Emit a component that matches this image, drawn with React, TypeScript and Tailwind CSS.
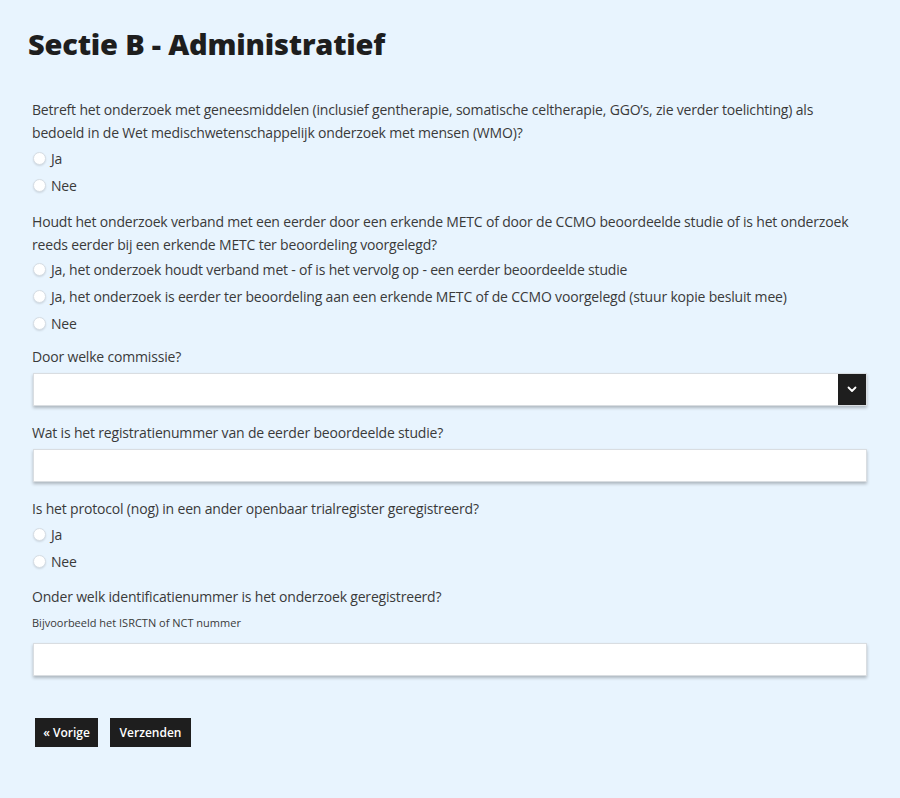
import React from "react";

const font = { fontFamily: '"Open Sans", "DejaVu Sans", sans-serif' };

const Radio = ({ label }: { label: string }) => (
  <label className="flex items-center h-[27px] text-[14px] text-[#3a3a3a]">
    <span className="w-[13px] h-[13px] rounded-full bg-white border border-[#d6dde4] shadow-[0_1px_2px_rgba(0,0,0,0.12)] mr-[5px] ml-[1px]" />
    {label}
  </label>
);

const Input = () => (
  <div className="h-[33px] bg-white border border-[#d9dde1] shadow-[0_2px_3px_rgba(0,0,0,0.25)] mr-[33px] ml-px" />
);

export default function App() {
  return (
    <div className="min-h-[798px] bg-[#e8f4fe] pl-[32px] pt-[26px]" style={font}>
      <h1 className="text-[29px] font-extrabold text-[#1e1e1e] -ml-[4px] leading-[36px] tracking-[-0.2px]">
        Sectie B - Administratief
      </h1>

      <div className="mt-[36px] text-[14px] text-[#3a3a3a] leading-[23px] tracking-[-0.18px]">
        <p>
          Betreft het onderzoek met geneesmiddelen (inclusief gentherapie, somatische celtherapie, GGO’s, zie verder
          toelichting) als
          <br />
          bedoeld in de Wet medischwetenschappelijk onderzoek met mensen (WMO)?
        </p>
        <div className="mt-[1px]">
          <Radio label="Ja" />
          <Radio label="Nee" />
        </div>

        <p className="mt-[11px]">
          Houdt het onderzoek verband met een eerder door een erkende METC of door de CCMO beoordeelde studie of is het
          onderzoek
          <br />
          reeds eerder bij een erkende METC ter beoordeling voorgelegd?
        </p>
        <div>
          <Radio label="Ja, het onderzoek houdt verband met - of is het vervolg op - een eerder beoordeelde studie" />
          <Radio label="Ja, het onderzoek is eerder ter beoordeling aan een erkende METC of de CCMO voorgelegd (stuur kopie besluit mee)" />
          <Radio label="Nee" />
        </div>

        <p className="mt-[8px]">Door welke commissie?</p>
        <div className="mt-[5px] h-[33px] bg-white border border-[#d9dde1] shadow-[0_2px_3px_rgba(0,0,0,0.25)] mr-[33px] ml-px flex justify-end">
          <div className="w-[28px] h-full bg-[#1e1e1e] flex items-center justify-center">
            <svg width="10" height="7" viewBox="0 0 10 7" fill="none">
              <path d="M1.5 1.5 L5 5 L8.5 1.5" stroke="white" strokeWidth="1.8" strokeLinecap="round" strokeLinejoin="round" />
            </svg>
          </div>
        </div>

        <p className="mt-[15px]">Wat is het registratienummer van de eerder beoordeelde studie?</p>
        <div className="mt-[5px]">
          <Input />
        </div>

        <p className="mt-[15px]">Is het protocol (nog) in een ander openbaar trialregister geregistreerd?</p>
        <div className="mt-[1px]">
          <Radio label="Ja" />
          <Radio label="Nee" />
        </div>

        <p className="mt-[10px]">Onder welk identificatienummer is het onderzoek geregistreerd?</p>
        <p className="mt-[6px] text-[11px] leading-[18px] tracking-normal">Bijvoorbeeld het ISRCTN of NCT nummer</p>
        <div className="mt-[11px]">
          <Input />
        </div>

        <div className="flex gap-[12px] mt-[42px] ml-[3px] tracking-normal">
          <button className="h-[29px] w-[63px] bg-[#1e1e1e] text-white text-[12px] font-semibold">« Vorige</button>
          <button className="h-[29px] w-[81px] bg-[#1e1e1e] text-white text-[12px] font-semibold">Verzenden</button>
        </div>
      </div>
    </div>
  );
}
